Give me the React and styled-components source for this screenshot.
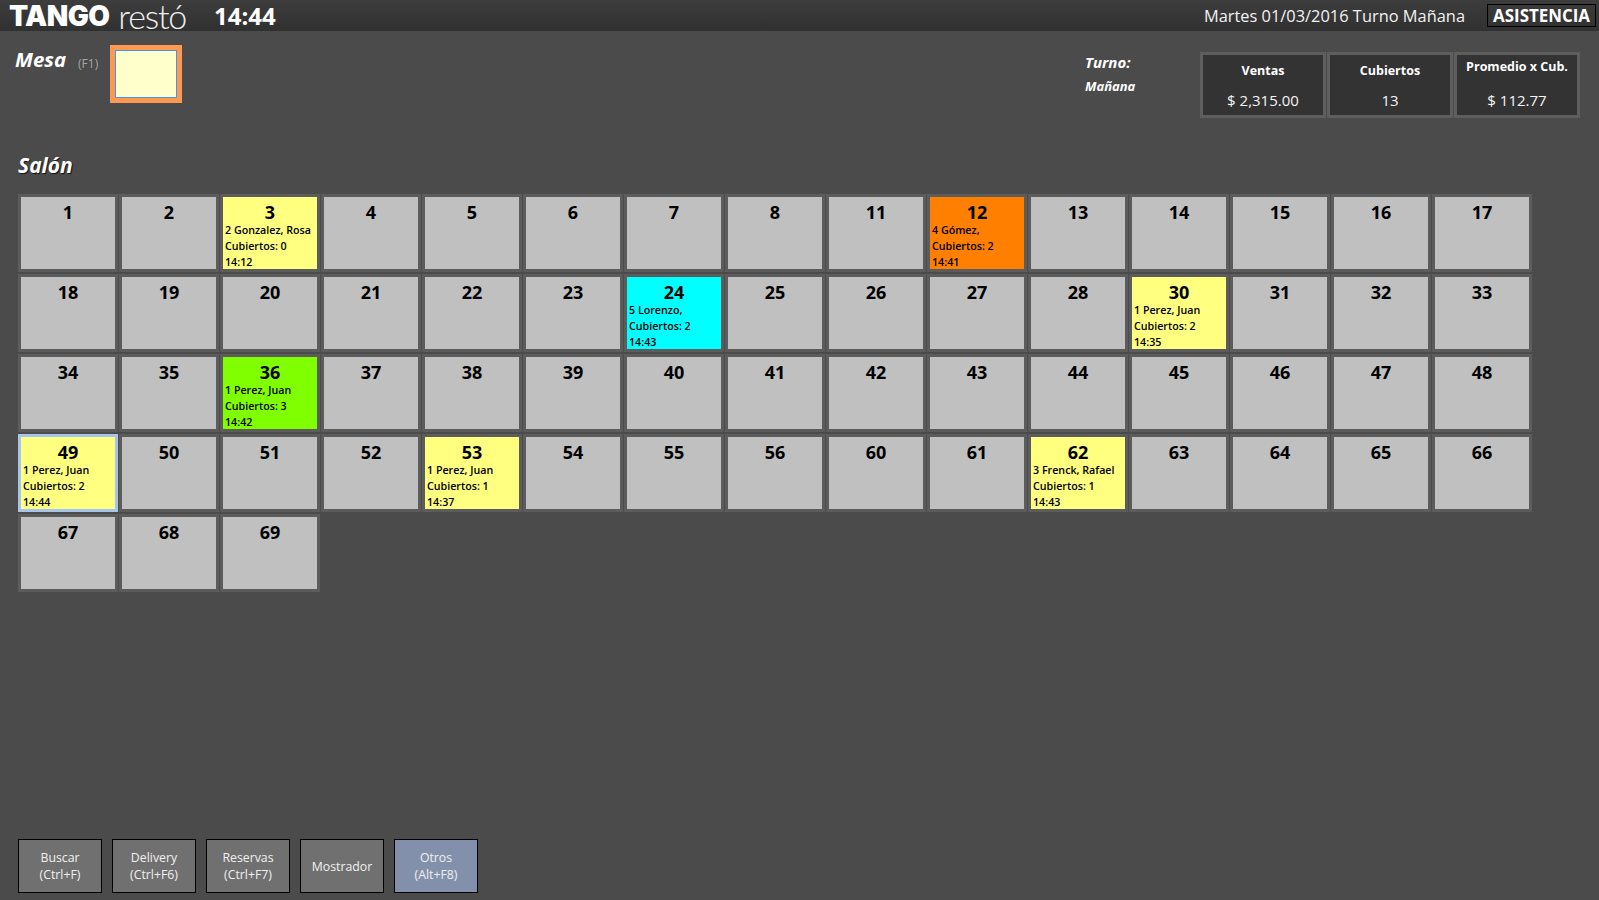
import React from 'react';
import styled, { createGlobalStyle } from 'styled-components';

const GlobalStyle = createGlobalStyle`
  html, body { margin: 0; padding: 0; height: 100%; background: #4b4b4b; }
  body { font-family: "Open Sans", "Noto Sans", sans-serif; color: #fff; overflow: hidden; }
`;

const Page = styled.div`
  height: 900px;
  display: flex;
  flex-direction: column;
`;

const TopBar = styled.header`
  height: 31px;
  display: flex;
  align-items: center;
  background: linear-gradient(#3d3d3d, #303030);
  padding: 0 3px 0 9px;
`;

const Logo = styled.div`
  display: flex;
  align-items: center;
  width: 205px;
  flex: none;
`;

const LogoBold = styled.span`
  font-family: Inter, sans-serif;
  font-weight: 900;
  font-size: 28px;
  letter-spacing: -0.6px;
`;

const LogoThin = styled.span`
  font-family: Lato, sans-serif;
  font-weight: 300;
  font-size: 34px;
  line-height: 31px;
  letter-spacing: -1.2px;
  margin-left: 9px;
  color: #efefef;
`;

const Clock = styled.div`
  font-size: 24px;
  font-weight: 700;
`;

const DateText = styled.div`
  margin-left: auto;
  font-size: 16.4px;
  color: #f2f2f2;
`;

const Attendance = styled.div`
  margin-left: 22px;
  width: 109px;
  height: 23px;
  box-sizing: border-box;
  border: 1px solid #000;
  text-align: center;
  font-size: 16.9px;
  font-weight: 700;
  line-height: 21px;
`;

const Summary = styled.section`
  height: 87px;
  display: flex;
  align-items: flex-start;
  padding: 0 19px 0 15px;
`;

const TableTitle = styled.h2`
  margin: 15px 0 0;
  font-size: 20.4px;
  font-weight: 700;
  font-style: italic;
  line-height: 27px;
`;

const KeyHint = styled.span`
  margin: 25px 0 0 12px;
  width: 32px;
  font-size: 12px;
  line-height: 16px;
  color: #a4a4a4;
`;

const TableInput = styled.div`
  margin-top: 14px;
  width: 72px;
  height: 58px;
  box-sizing: border-box;
  border: 5px solid #ff9850;
  background: #ffffcc;
  outline: 1px solid #3f96f0;
  outline-offset: -6px;
`;

const Shift = styled.div`
  margin: 22px 0 0 auto;
  width: 115px;
  font-weight: 700;
  font-style: italic;
`;

const ShiftLabel = styled.div`
  font-size: 15px;
  line-height: 19px;
`;

const ShiftValue = styled.div`
  margin-top: 5px;
  font-size: 13px;
  line-height: 18px;
`;

const Stats = styled.div`
  margin-top: 21px;
  display: flex;
  gap: 1px;
`;

const Stat = styled.div`
  width: 126px;
  height: 66px;
  box-sizing: border-box;
  border: 3px solid #5e5e5e;
  background: #333;
  text-align: center;
`;

const StatLabel = styled.div`
  margin-top: ${p => (p.$high ? '3px' : '7px')};
  font-size: 12.5px;
  font-weight: 700;
  line-height: 18px;
`;

const StatValue = styled.div`
  margin-top: ${p => (p.$high ? '14px' : '10px')};
  font-size: 15px;
  line-height: 20px;
  color: #f4f4f4;
`;

const Hall = styled.section`
  padding: 0 18px;
`;

const HallTitle = styled.h2`
  margin: 34px 0 15px;
  font-size: 21px;
  font-weight: 700;
  font-style: italic;
  line-height: 27px;
  text-shadow: 1px 1px 1px #111;
`;

const TileGrid = styled.div`
  display: grid;
  grid-template-columns: repeat(15, 100px);
  grid-auto-rows: 78px;
  gap: 2px 1px;
`;

const tileColors = {
  free: '#c0c0c0',
  yellow: '#ffff80',
  orange: '#ff8000',
  cyan: '#00ffff',
  green: '#80ff00',
};

const Tile = styled.div`
  box-sizing: border-box;
  border: 3px solid ${p => (p.$selected ? '#a6c4ec' : '#5c5c5c')};
  background: ${p => tileColors[p.$status]};
  color: #000;
  padding: 0 2px;
  overflow: hidden;
`;

const TileNumber = styled.div`
  text-align: center;
  font-size: 18px;
  font-weight: 700;
  line-height: 22px;
  margin: 4px 0 -1px;
`;

const TileLine = styled.div`
  font-size: 10.7px;
  font-weight: 600;
  line-height: 16px;
  white-space: nowrap;
`;

const Footer = styled.footer`
  margin-top: auto;
  padding: 0 0 7px 18px;
  display: flex;
  gap: 10px;
`;

const ActionButton = styled.button`
  width: 84px;
  height: 54px;
  padding: 0;
  border: 1px solid #000;
  background: ${p => (p.$accent ? '#8390ab' : '#707070')};
  color: #f0f0f0;
  font-family: inherit;
  font-size: 12.3px;
  line-height: 17px;
`;

const numbers = [
  1, 2, 3, 4, 5, 6, 7, 8, 11, 12, 13, 14, 15, 16, 17,
  18, 19, 20, 21, 22, 23, 24, 25, 26, 27, 28, 30, 31, 32, 33,
  34, 35, 36, 37, 38, 39, 40, 41, 42, 43, 44, 45, 46, 47, 48,
  49, 50, 51, 52, 53, 54, 55, 56, 60, 61, 62, 63, 64, 65, 66,
  67, 68, 69,
];

const occupied = {
  3: { status: 'yellow', lines: ['2 Gonzalez, Rosa', 'Cubiertos: 0', '14:12'] },
  12: { status: 'orange', lines: ['4 Gómez,', 'Cubiertos: 2', '14:41'] },
  24: { status: 'cyan', lines: ['5 Lorenzo,', 'Cubiertos: 2', '14:43'] },
  30: { status: 'yellow', lines: ['1 Perez, Juan', 'Cubiertos: 2', '14:35'] },
  36: { status: 'green', lines: ['1 Perez, Juan', 'Cubiertos: 3', '14:42'] },
  49: { status: 'yellow', selected: true, lines: ['1 Perez, Juan', 'Cubiertos: 2', '14:44'] },
  53: { status: 'yellow', lines: ['1 Perez, Juan', 'Cubiertos: 1', '14:37'] },
  62: { status: 'yellow', lines: ['3 Frenck, Rafael', 'Cubiertos: 1', '14:43'] },
};

const actions = [
  ['Buscar', '(Ctrl+F)'],
  ['Delivery', '(Ctrl+F6)'],
  ['Reservas', '(Ctrl+F7)'],
  ['Mostrador'],
  ['Otros', '(Alt+F8)'],
];

export default function App() {
  return (
    <Page>
      <GlobalStyle />
      <TopBar>
        <Logo>
          <LogoBold>TANGO</LogoBold>
          <LogoThin>restó</LogoThin>
        </Logo>
        <Clock>14:44</Clock>
        <DateText>Martes 01/03/2016 Turno Mañana</DateText>
        <Attendance>ASISTENCIA</Attendance>
      </TopBar>

      <Summary>
        <TableTitle>Mesa</TableTitle>
        <KeyHint>(F1)</KeyHint>
        <TableInput />
        <Shift>
          <ShiftLabel>Turno:</ShiftLabel>
          <ShiftValue>Mañana</ShiftValue>
        </Shift>
        <Stats>
          <Stat>
            <StatLabel>Ventas</StatLabel>
            <StatValue>$ 2,315.00</StatValue>
          </Stat>
          <Stat>
            <StatLabel>Cubiertos</StatLabel>
            <StatValue>13</StatValue>
          </Stat>
          <Stat>
            <StatLabel $high>Promedio x Cub.</StatLabel>
            <StatValue $high>$ 112.77</StatValue>
          </Stat>
        </Stats>
      </Summary>

      <Hall>
        <HallTitle>Salón</HallTitle>
        <TileGrid>
          {numbers.map(n => {
            const info = occupied[n];
            return (
              <Tile key={n} $status={info ? info.status : 'free'} $selected={info && info.selected}>
                <TileNumber>{n}</TileNumber>
                {info && info.lines.map(line => <TileLine key={line}>{line}</TileLine>)}
              </Tile>
            );
          })}
        </TileGrid>
      </Hall>

      <Footer>
        {actions.map(([label, key]) => (
          <ActionButton key={label} $accent={label === 'Otros'}>
            {label}
            {key && <br />}
            {key}
          </ActionButton>
        ))}
      </Footer>
    </Page>
  );
}
